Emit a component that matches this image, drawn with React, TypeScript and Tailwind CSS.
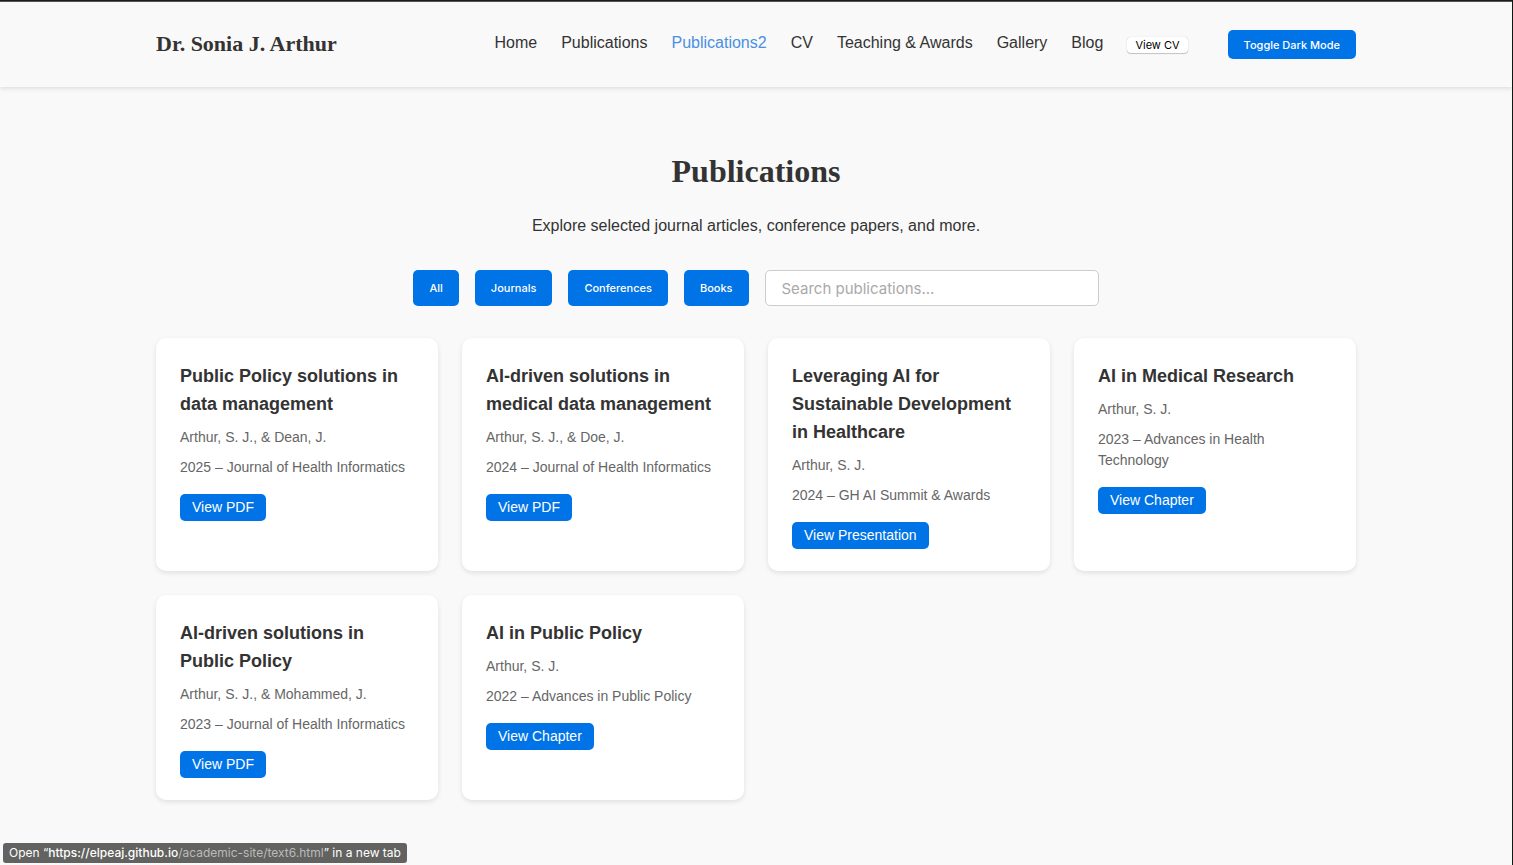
import React from "react";

type Publication = {
  title: string;
  authors: string;
  venue: string;
  action: string;
};

const links = ["Home", "Publications", "Publications2", "CV", "Teaching & Awards", "Gallery", "Blog"];
const filters = ["All", "Journals", "Conferences", "Books"];

const publications: Publication[] = [
  { title: "Public Policy solutions in data management", authors: "Arthur, S. J., & Dean, J.", venue: "2025 – Journal of Health Informatics", action: "View PDF" },
  { title: "AI-driven solutions in medical data management", authors: "Arthur, S. J., & Doe, J.", venue: "2024 – Journal of Health Informatics", action: "View PDF" },
  { title: "Leveraging AI for Sustainable Development in Healthcare", authors: "Arthur, S. J.", venue: "2024 – GH AI Summit & Awards", action: "View Presentation" },
  { title: "AI in Medical Research", authors: "Arthur, S. J.", venue: "2023 – Advances in Health Technology", action: "View Chapter" },
  { title: "AI-driven solutions in Public Policy", authors: "Arthur, S. J., & Mohammed, J.", venue: "2023 – Journal of Health Informatics", action: "View PDF" },
  { title: "AI in Public Policy", authors: "Arthur, S. J.", venue: "2022 – Advances in Public Policy", action: "View Chapter" },
];

function Header() {
  return (
    <header className="shadow-[0_2px_4px_rgba(0,0,0,0.1)]">
      <div className="h-px bg-[#1c1c1c]" />
      <div className="h-px bg-[#575354]" />
      <div className="mx-auto flex h-[85px] max-w-[1200px] items-center justify-between">
        <div className="pb-[2px] font-['Liberation_Serif',serif] text-[22px] font-bold">Dr. Sonia J. Arthur</div>
        <div className="flex items-center gap-10">
          <nav className="flex items-center gap-6">
            {links.map((link) => (
              <a
                key={link}
                href="#"
                className={link === "Publications2" ? "pb-1 text-base text-[#4a90e2]" : "pb-1 text-base"}
              >
                {link}
              </a>
            ))}
            <button type="button" className="h-4 rounded-[4px] bg-white px-2 font-[Inter,sans-serif] text-[11px] leading-4 text-black shadow-[0_0_1px_rgba(0,0,0,0.25),0_1px_1px_rgba(0,0,0,0.2)]">
              View CV
            </button>
          </nav>
          <button type="button" className="h-[29px] rounded-[5px] bg-[#0073e6] px-4 pt-px font-[Inter,sans-serif] text-[11px] font-medium text-white">
            Toggle Dark Mode
          </button>
        </div>
      </div>
    </header>
  );
}

function Card({ title, authors, venue, action }: Publication) {
  return (
    <article className="rounded-[10px] bg-white px-6 pt-6 pb-[22px] shadow-[0_2px_5px_rgba(0,0,0,0.1)]">
      <h2 className="text-[18px] leading-7 font-bold">{title}</h2>
      <p className="mt-2 text-[14px] leading-[23px] text-[#666]">{authors}</p>
      <p className="mt-2 text-[14px] leading-[21px] text-[#666]">{venue}</p>
      <a href="#" className="mt-4 inline-block rounded-[5px] bg-[#0073e6] px-3 text-[14px] leading-[27px] text-white">
        {action}
      </a>
    </article>
  );
}

export default function App() {
  return (
    <div className="min-h-screen border-r border-[#0f1a14] bg-[#f9f9f9] font-['Liberation_Sans',Arial,sans-serif] text-[#333]">
      <Header />
      <main className="mx-auto max-w-[1200px] pt-16 pb-16">
        <h1 className="text-center font-['Liberation_Serif',serif] text-[32px] leading-10 font-bold">Publications</h1>
        <p className="mt-[23px] text-center text-base">Explore selected journal articles, conference papers, and more.</p>
        <div className="mt-8 flex justify-center gap-4">
          {filters.map((filter) => (
            <button key={filter} type="button" className="h-9 rounded-[5px] bg-[#0073e6] px-4 pt-px font-[Inter,sans-serif] text-[11px] font-medium text-white">
              {filter}
            </button>
          ))}
          <input
            type="search"
            aria-label="Search publications"
            placeholder="Search publications..."
            className="h-9 w-[334px] rounded-[5px] border border-[#ccc] bg-white px-4 font-[Inter,sans-serif] text-[15px] placeholder:text-[#a9a9a9]"
          />
        </div>
        <section className="mt-8 grid grid-cols-4 gap-6">
          {publications.map((publication) => (
            <Card key={publication.title} {...publication} />
          ))}
        </section>
      </main>
      <div className="fixed bottom-[2px] left-[3px] rounded-[3px] bg-[#626260] px-[6px] font-[Inter,sans-serif] text-[12px] leading-5 text-white">
        Open “<b className="font-medium">https://elpeaj.github.io</b>
        <span className="text-[#bbb]">/academic-site/text6.html</span>” in a new tab
      </div>
    </div>
  );
}
